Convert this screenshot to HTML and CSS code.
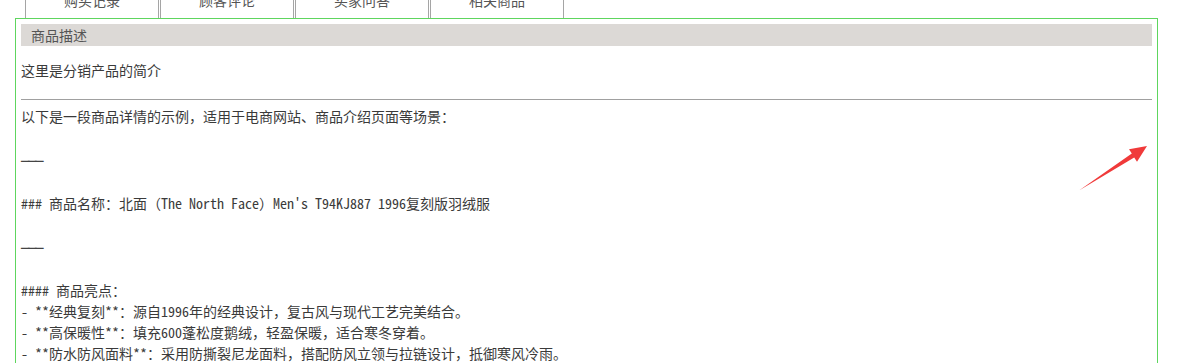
FILE: index.html
```html
<!DOCTYPE html>
<html lang="zh-CN">
<head>
<meta charset="utf-8">
<title>商品描述</title>
<link rel="stylesheet" href="styles.css">
</head>
<body>
<div class="page">
  <ul class="tabs">
    <li class="tab">购买记录</li>
    <li class="tab">顾客评论</li>
    <li class="tab">买家问答</li>
    <li class="tab">相关商品</li>
  </ul>
  <section class="panel">
    <h2 class="panel-title">商品描述</h2>
    <p class="intro">这里是分销产品的简介</p>
    <hr class="divider">
    <div class="desc">以下是一段商品详情的示例，适用于电商网站、商品介绍页面等场景：

<span class="rule">───</span>

### 商品名称：北面（The North Face）Men's T94KJ887 1996复刻版羽绒服

<span class="rule">───</span>

#### 商品亮点：
- **经典复刻**：源自1996年的经典设计，复古风与现代工艺完美结合。
- **高保暖性**：填充600蓬松度鹅绒，轻盈保暖，适合寒冬穿着。
- **防水防风面料**：采用防撕裂尼龙面料，搭配防风立领与拉链设计，抵御寒风冷雨。</div>
  </section>
  <svg class="arrow" width="90" height="60" viewBox="0 0 90 60" aria-hidden="true">
    <polygon points="77,6 59,9.3 61.8,13.6 9,50.5 64.2,17.4 67,21.7" fill="#f03a3a"/>
  </svg>
</div>
</body>
</html>
```

FILE: styles.css
```css
* { box-sizing: border-box; }

html, body {
  margin: 0;
  padding: 0;
  background: #fff;
}

body {
  font-family: "Noto Sans Mono CJK SC", "Liberation Serif", "Noto Sans CJK SC", sans-serif;
  font-size: 14px;
  color: #3a3a3a;
  overflow: hidden;
}

.page {
  position: relative;
  width: 1181px;
  height: 363px;
  padding-top: 1px;
}

.tabs {
  list-style: none;
  margin: -15px 0 0 25px;
  padding: 0;
  display: flex;
  gap: 1px;
}

.tab {
  width: 134px;
  height: 32px;
  line-height: 28px;
  text-align: center;
  border-left: 1px solid #a5a5a5;
  border-right: 1px solid #a5a5a5;
  background: #fff;
  color: #555;
  font-family: "Noto Sans CJK SC", sans-serif;
}

.panel {
  margin-left: 15px;
  width: 1143px;
  height: 400px;
  border: 1px solid #5ed65e;
  padding: 5px;
}

.panel-title {
  margin: 0;
  height: 22px;
  line-height: 22px;
  padding-left: 10px;
  background: #dcd9d6;
  color: #555;
  font-size: 14px;
  font-weight: normal;
  font-family: "Noto Sans CJK SC", sans-serif;
}

.intro {
  margin: 14px 0 0;
  line-height: 21px;
}

.divider {
  margin: 18px 0 0;
  border: 0;
  border-top: 1px solid #a0a0a0;
  height: 0;
}

.desc {
  margin-top: 6px;
  line-height: 21px;
  white-space: pre-line;
}

.rule {
  font-family: "DejaVu Sans Mono", monospace;
  letter-spacing: -1.4px;
  color: #444;
  vertical-align: -2px;
}

.arrow {
  position: absolute;
  left: 1070px;
  top: 140px;
}
```
